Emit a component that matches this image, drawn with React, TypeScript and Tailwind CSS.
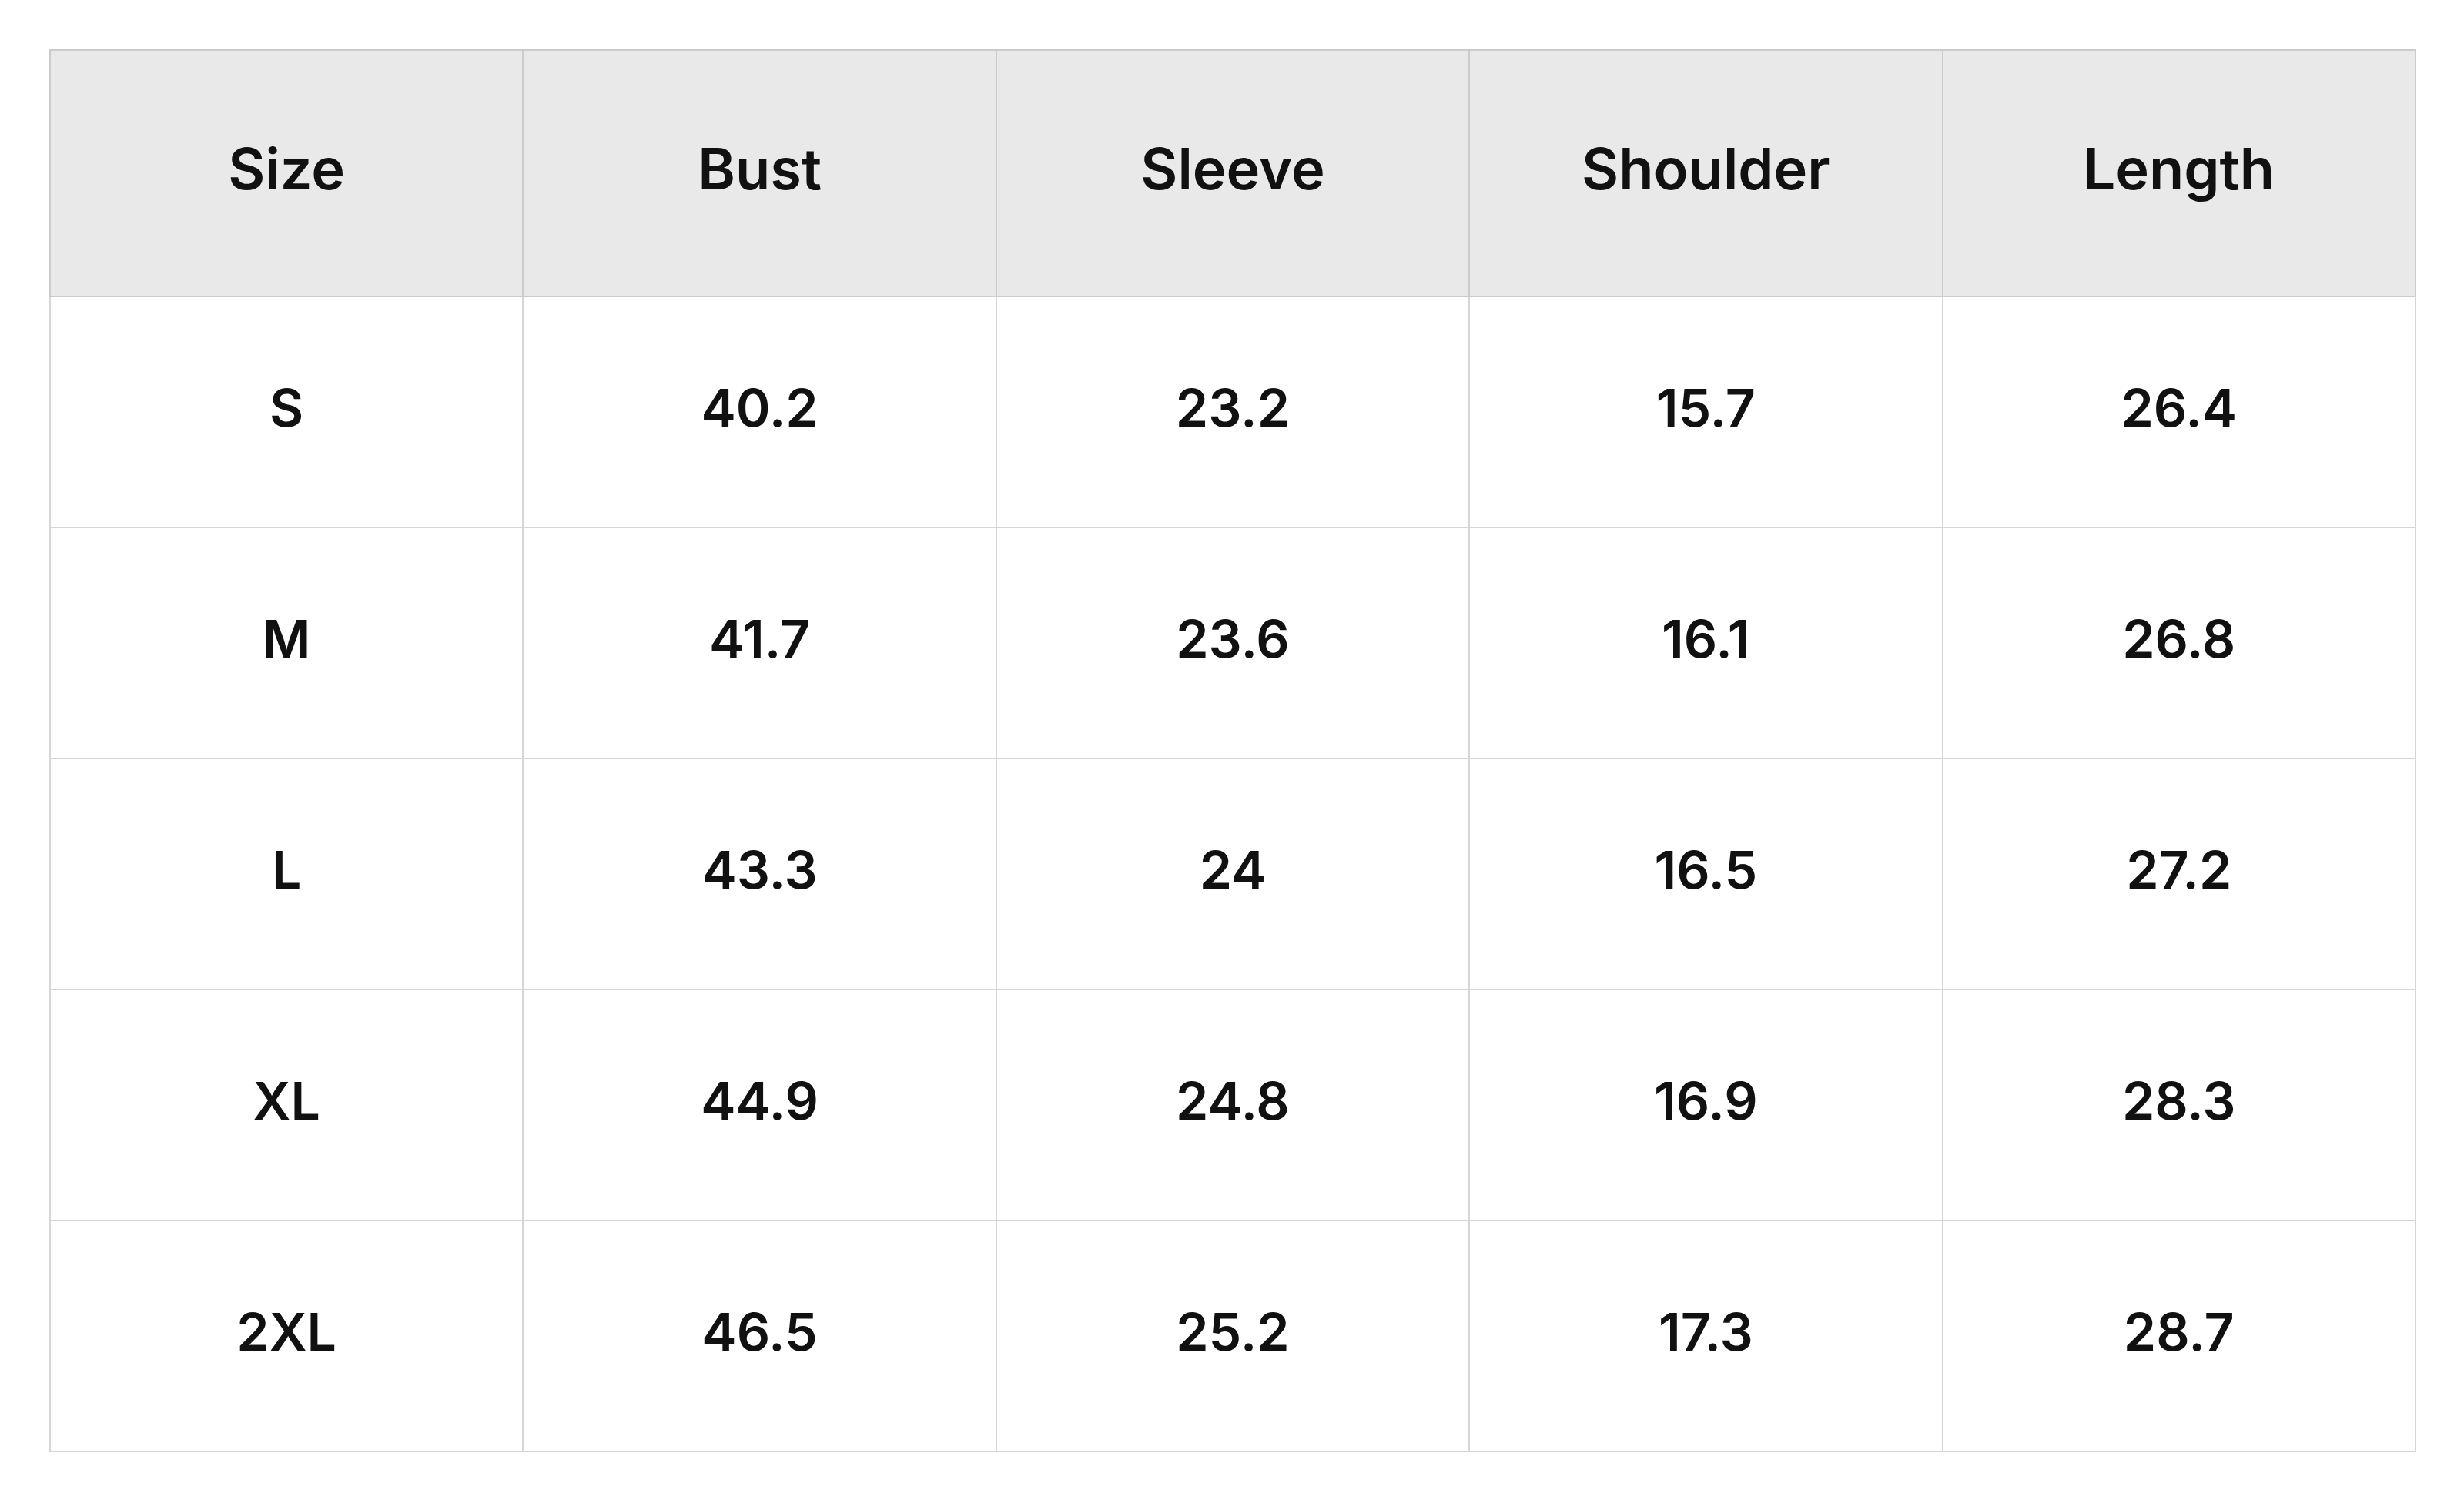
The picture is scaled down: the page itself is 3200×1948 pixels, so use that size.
const headers = ["Size", "Bust", "Sleeve", "Shoulder", "Length"];

const rows = [
  ["S", "40.2", "23.2", "15.7", "26.4"],
  ["M", "41.7", "23.6", "16.1", "26.8"],
  ["L", "43.3", "24", "16.5", "27.2"],
  ["XL", "44.9", "24.8", "16.9", "28.3"],
  ["2XL", "46.5", "25.2", "17.3", "28.7"],
];

export default function App() {
  return (
    <div className="min-h-screen bg-white px-[64px] py-[64px] font-['Inter','Liberation_Sans',sans-serif] text-[#111111]">
      <table className="w-[3074px] table-fixed border-collapse">
        <thead>
          <tr className="h-[320px] bg-[#e9e9e9]">
            {headers.map((h) => (
              <th
                key={h}
                className="border-2 border-[#cbcbcb] pb-[12px] text-center align-middle text-[74px] font-semibold"
              >
                {h}
              </th>
            ))}
          </tr>
        </thead>
        <tbody>
          {rows.map((row) => (
            <tr key={row[0]} className="h-[300px]">
              {row.map((cell, i) => (
                <td
                  key={i}
                  className="border-2 border-[#d6d6d6] pb-[12px] text-center align-middle text-[68px] font-semibold"
                >
                  {cell}
                </td>
              ))}
            </tr>
          ))}
        </tbody>
      </table>
    </div>
  );
}
